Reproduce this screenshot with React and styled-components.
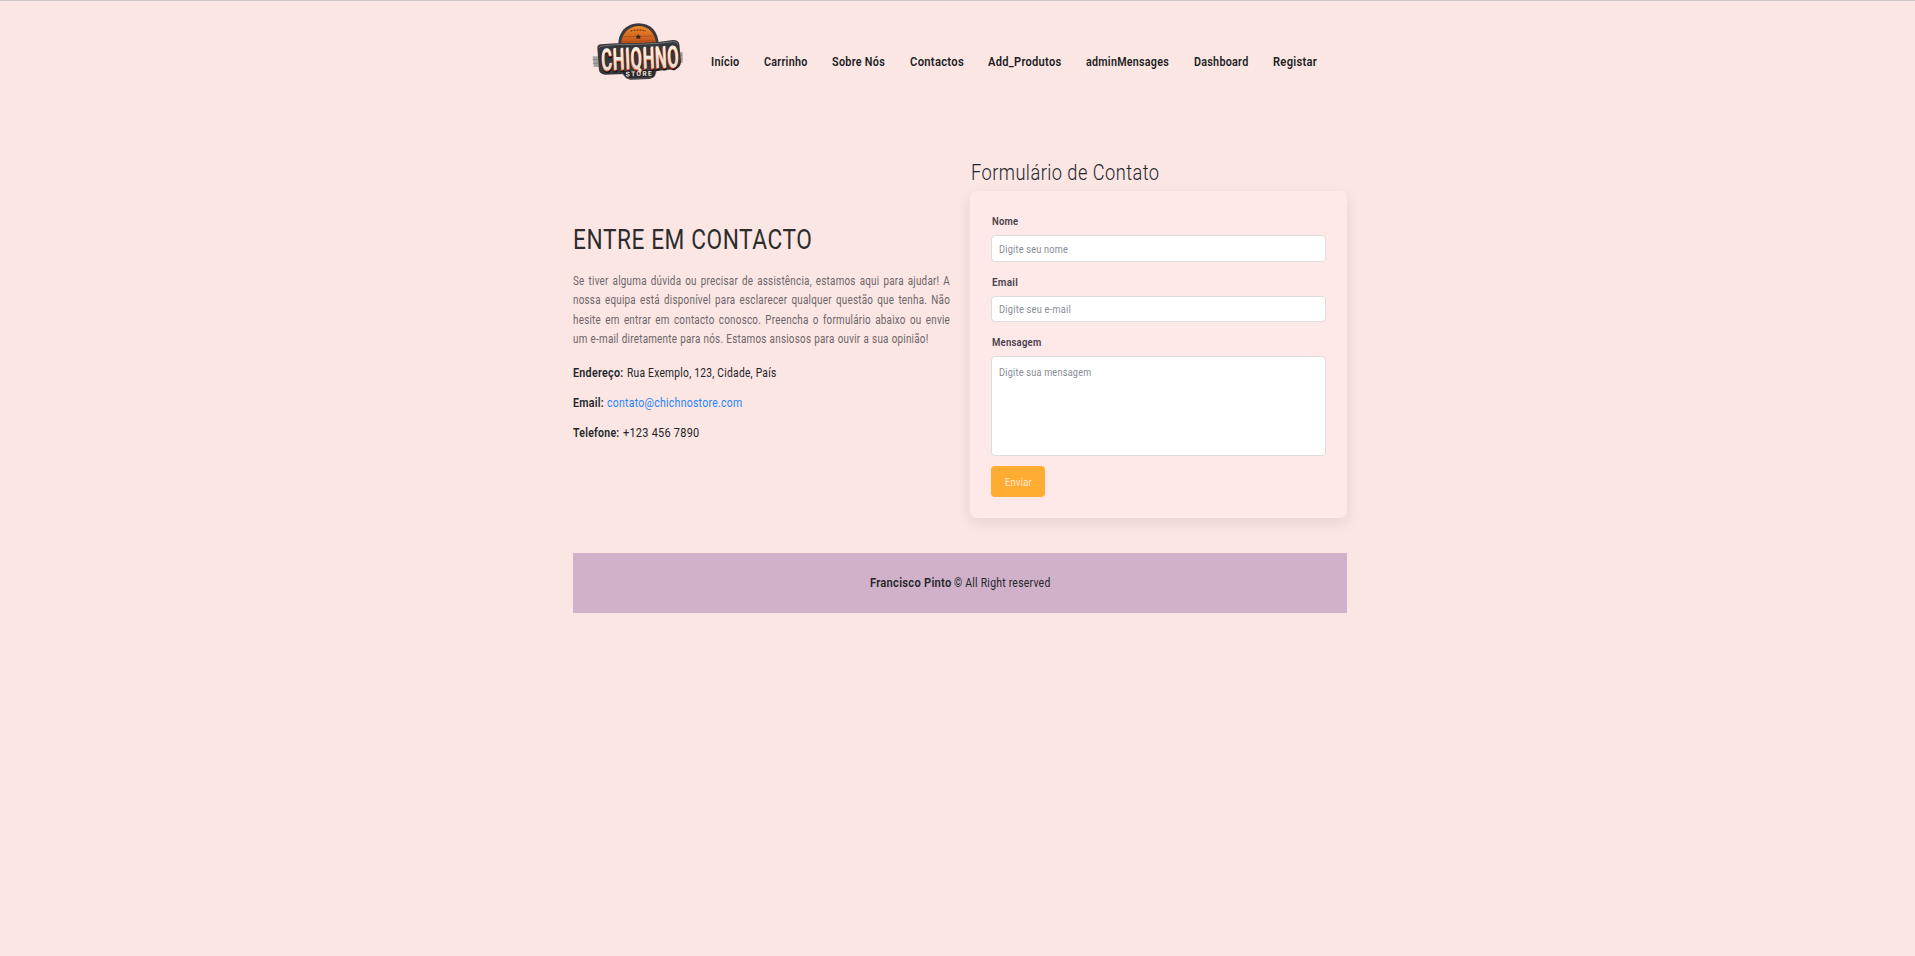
import React, { useLayoutEffect, useRef, useState } from "react";
import styled, { createGlobalStyle } from "styled-components";

const GlobalStyle = createGlobalStyle`
  *, *::before, *::after { box-sizing: border-box; }
  body {
    margin: 0;
    background: #fce6e4;
    color: #212529;
    font-family: Roboto, "Liberation Sans", sans-serif;
  }
`;

const Page = styled.div`
  min-height: 956px;
  border-top: 1px solid #cbc7c6;
`;

const Container = styled.div`
  width: 774px;
  margin-left: 573px;
`;

const Header = styled.header`
  display: flex;
  height: 150px;
  padding: 14px 0 0 7px;
`;

const Nav = styled.nav`
  display: flex;
  gap: 24.6px;
  padding: 36px 0 0 16px;
`;

const FitBox = styled.span`
  display: block;
  flex: none;
  width: ${(p) => p.$w}px;
  height: ${(p) => p.$line}px;
  font-size: ${(p) => p.$size}px;
  line-height: ${(p) => p.$line}px;
  font-weight: ${(p) => p.$weight};
  color: ${(p) => p.$color};
  letter-spacing: 0.025em;
  white-space: nowrap;
`;

const FitInner = styled.span`
  display: inline-block;
  transform-origin: 0 50%;
`;

/* Narrow lettering: squeezes a line of text to the given width. */
function Narrow({ w, size = 14, line = 20, weight = 400, color = "inherit", children }) {
  const ref = useRef(null);
  const [k, setK] = useState(1);
  useLayoutEffect(() => {
    setK(w / parseFloat(getComputedStyle(ref.current).width));
  }, [w]);
  return (
    <FitBox $w={w} $size={size} $line={line} $weight={weight} $color={color}>
      <FitInner ref={ref} style={{ transform: `scaleX(${k})` }}>{children}</FitInner>
    </FitBox>
  );
}

const Columns = styled.main`
  display: grid;
  grid-template-columns: 377px 377px;
  gap: 20px;
  height: 402px;
`;

const Info = styled.section`
  padding-top: 71px;
`;

const Paragraph = styled.div`
  padding: 14px 0 12.8px;
`;

const ParagraphLine = styled.div`
  width: ${(p) => p.$w / 0.8}px;
  height: 19.3px;
  transform: scaleX(0.8);
  transform-origin: 0 50%;
  font-size: 12.3px;
  line-height: 19.3px;
  letter-spacing: 0.025em;
  color: #6a6566;
  white-space: nowrap;
  text-align: justify;
  text-align-last: justify;
`;

const Detail = styled.div`
  display: flex;
  gap: 3px;
  height: 30px;
`;

const FormColumn = styled.section`
  padding-top: 7px;
`;

const FormTitle = styled.div`
  height: 33px;
  padding-left: 0.5px;
`;

const Card = styled.div`
  height: 327px;
  padding: 20px 21px;
  border-radius: 7px;
  background: #ffe8e8;
  box-shadow: 0 5px 15px rgba(0, 0, 0, 0.09);
`;

const Field = styled.div`
  height: ${(p) => p.$h}px;
`;

const Label = styled.div`
  height: 24px;
  padding-left: 0.5px;
`;

const Control = styled.div`
  height: ${(p) => p.$h}px;
  padding: ${(p) => p.$top}px 0 0 7px;
  border: 1px solid #dcdcdc;
  border-radius: 4px;
  background: #fff;
`;

const Button = styled.button`
  display: flex;
  align-items: center;
  width: 54px;
  height: 31px;
  padding: 0 0 0 13.5px;
  border: 0;
  border-radius: 4px;
  background: #ffac33;
  font-family: inherit;
  text-align: left;
`;

const Footer = styled.footer`
  display: flex;
  justify-content: center;
  gap: 3px;
  height: 60px;
  padding-top: 19px;
  background: #d1b1c9;
`;

const LogoSvg = styled.svg`
  display: block;
  flex: none;
  overflow: visible;
`;

function Word({ dx = 0, dy = 0, ...paint }) {
  return (
    <text y={160 + dy} fontSize="92" {...paint} transform={`translate(${dx + 64} 0) scale(0.545 1)`} letterSpacing="3">
      CHIQHNO
    </text>
  );
}

function Logo() {
  return (
    <LogoSvg width="115" height="75" viewBox="0 0 345 225">
      <defs>
        <linearGradient id="sun" x1="0" y1="0" x2="0" y2="1">
          <stop offset="0" stopColor="#f08a2a" />
          <stop offset="1" stopColor="#b84716" />
        </linearGradient>
        <linearGradient id="face" x1="0" y1="0" x2="0" y2="1">
          <stop offset="0" stopColor="#fffaf0" />
          <stop offset="1" stopColor="#ded3c5" />
        </linearGradient>
      </defs>
      <g transform="translate(0 2)">
        <path d="M38 122h24v32H41zM285 107l23 3v31l-22 4z" fill="#aaa2a2" />
        <path d="M38 132h24M39 143h22M287 118h20M287 130h20" stroke="#8f888a" strokeWidth="3" />
        <path d="M115 92C113 50 138 24 176 23c36 0 60 25 60 65z" fill="#393a3e" />
        <path d="M123 92C122 56 144 32 175 31c32 0 53 23 53 59z" fill="url(#sun)" />
        <path d="M131 63l88-2M125 78l100-3" stroke="#9c4b1d" strokeWidth="2" />
        <path d="M152 46q24-6 46 0" fill="none" stroke="#6b3518" strokeWidth="4" strokeDasharray="5 4" />
        <path d="M175 56l3 4 5 1-3 4 1 5-6-2-6 2 1-5-3-4 5-1z" fill="#39251f" />
        <path d="M52 97q0-11 11-11l44-3 70-1 57-3 45-6q17 0 19 13l5 51q0 18-15 23l-60 6-8 17q-3 6-12 7l-57 2q-10-1-12-8l-3-9-60 2q-17-1-19-13z" fill="#36373b" />
        <path d="M57 97q1-5 9-6l41-4 70-1 57-3 47-5q10 0 12 9" fill="none" stroke="#737276" strokeWidth="3" />
        <path d="M128 165l98-5q5 0 3 6l-5 15q-2 4-8 5l-69 3q-10 0-13-7l-9-12q-2-4 3-5z" fill="#29282c" stroke="#66646a" strokeWidth="2" />
        <g transform="rotate(-2.4 178 125)" fontFamily="Roboto, sans-serif" fontWeight="700">
          <Word dx={-1} dy={4} fill="#171417" stroke="#171417" strokeWidth="6" />
          <Word dx={-3} dy={3} fill="#cf421d" />
          <Word fill="url(#face)" />
        </g>
        <text x="137" y="181" transform="rotate(-2 178 178)" fontFamily="Roboto, sans-serif" fontSize="20" fontWeight="700" letterSpacing="4" fill="#eee6dd">STORE</text>
      </g>
    </LogoSvg>
  );
}

const links = [
  ["Início", 28.5],
  ["Carrinho", 43.5],
  ["Sobre Nós", 53],
  ["Contactos", 54],
  ["Add_Produtos", 73.5],
  ["adminMensages", 83],
  ["Dashboard", 54.5],
  ["Registar", 44],
];

export default function App() {
  return (
    <Page>
      <GlobalStyle />
      <Container>
        <Header>
          <Logo />
          <Nav>
            {links.map(([name, w]) => (
              <Narrow key={name} w={w} size={13.5} weight={600} color="#201c1e">{name}</Narrow>
            ))}
          </Nav>
        </Header>
        <Columns>
          <Info>
            <Narrow w={239.5} size={28} line={36} color="#2c2c2c">ENTRE EM CONTACTO</Narrow>
            <Paragraph>
              <ParagraphLine $w={377}>Se tiver alguma dúvida ou precisar de assistência, estamos aqui para ajudar! A</ParagraphLine>
              <ParagraphLine $w={377}>nossa equipa está disponível para esclarecer qualquer questão que tenha. Não</ParagraphLine>
              <ParagraphLine $w={377}>hesite em entrar em contacto conosco. Preencha o formulário abaixo ou envie</ParagraphLine>
              <ParagraphLine $w={355.5}>um e-mail diretamente para nós. Estamos ansiosos para ouvir a sua opinião!</ParagraphLine>
            </Paragraph>
            <Detail>
              <Narrow w={50.5} size={13.5} weight={600}>Endereço:</Narrow>
              <Narrow w={149.5} size={13.5}>Rua Exemplo, 123, Cidade, País</Narrow>
            </Detail>
            <Detail>
              <Narrow w={31} size={13.5} weight={600}>Email:</Narrow>
              <Narrow w={135.5} size={13.5} color="#2485ff">contato@chichnostore.com</Narrow>
            </Detail>
            <Detail>
              <Narrow w={46.5} size={13.5} weight={600}>Telefone:</Narrow>
              <Narrow w={76.5} size={13.5}>+123 456 7890</Narrow>
            </Detail>
          </Info>
          <FormColumn>
            <FormTitle>
              <Narrow w={188.5} size={22} line={30} weight={300}>Formulário de Contato</Narrow>
            </FormTitle>
            <Card>
              <Field $h={61}>
                <Label><Narrow w={26.5} size={11.5} weight={600} color="#46424a">Nome</Narrow></Label>
                <Control $h={27} $top={3}><Narrow w={69} size={11.5} color="#868b94">Digite seu nome</Narrow></Control>
              </Field>
              <Field $h={60}>
                <Label><Narrow w={26} size={11.5} weight={600} color="#46424a">Email</Narrow></Label>
                <Control $h={26} $top={2}><Narrow w={72} size={11.5} color="#868b94">Digite seu e-mail</Narrow></Control>
              </Field>
              <Field $h={134}>
                <Label><Narrow w={49.5} size={11.5} weight={600} color="#46424a">Mensagem</Narrow></Label>
                <Control $h={100} $top={5}><Narrow w={92.5} size={11.5} color="#868b94">Digite sua mensagem</Narrow></Control>
              </Field>
              <Button><Narrow w={27} size={11.5} color="#ffe8d8">Enviar</Narrow></Button>
            </Card>
          </FormColumn>
        </Columns>
        <Footer>
          <Narrow w={81.5} size={13.5} weight={600}>Francisco Pinto</Narrow>
          <Narrow w={96.5} size={13.5}>© All Right reserved</Narrow>
        </Footer>
      </Container>
    </Page>
  );
}
